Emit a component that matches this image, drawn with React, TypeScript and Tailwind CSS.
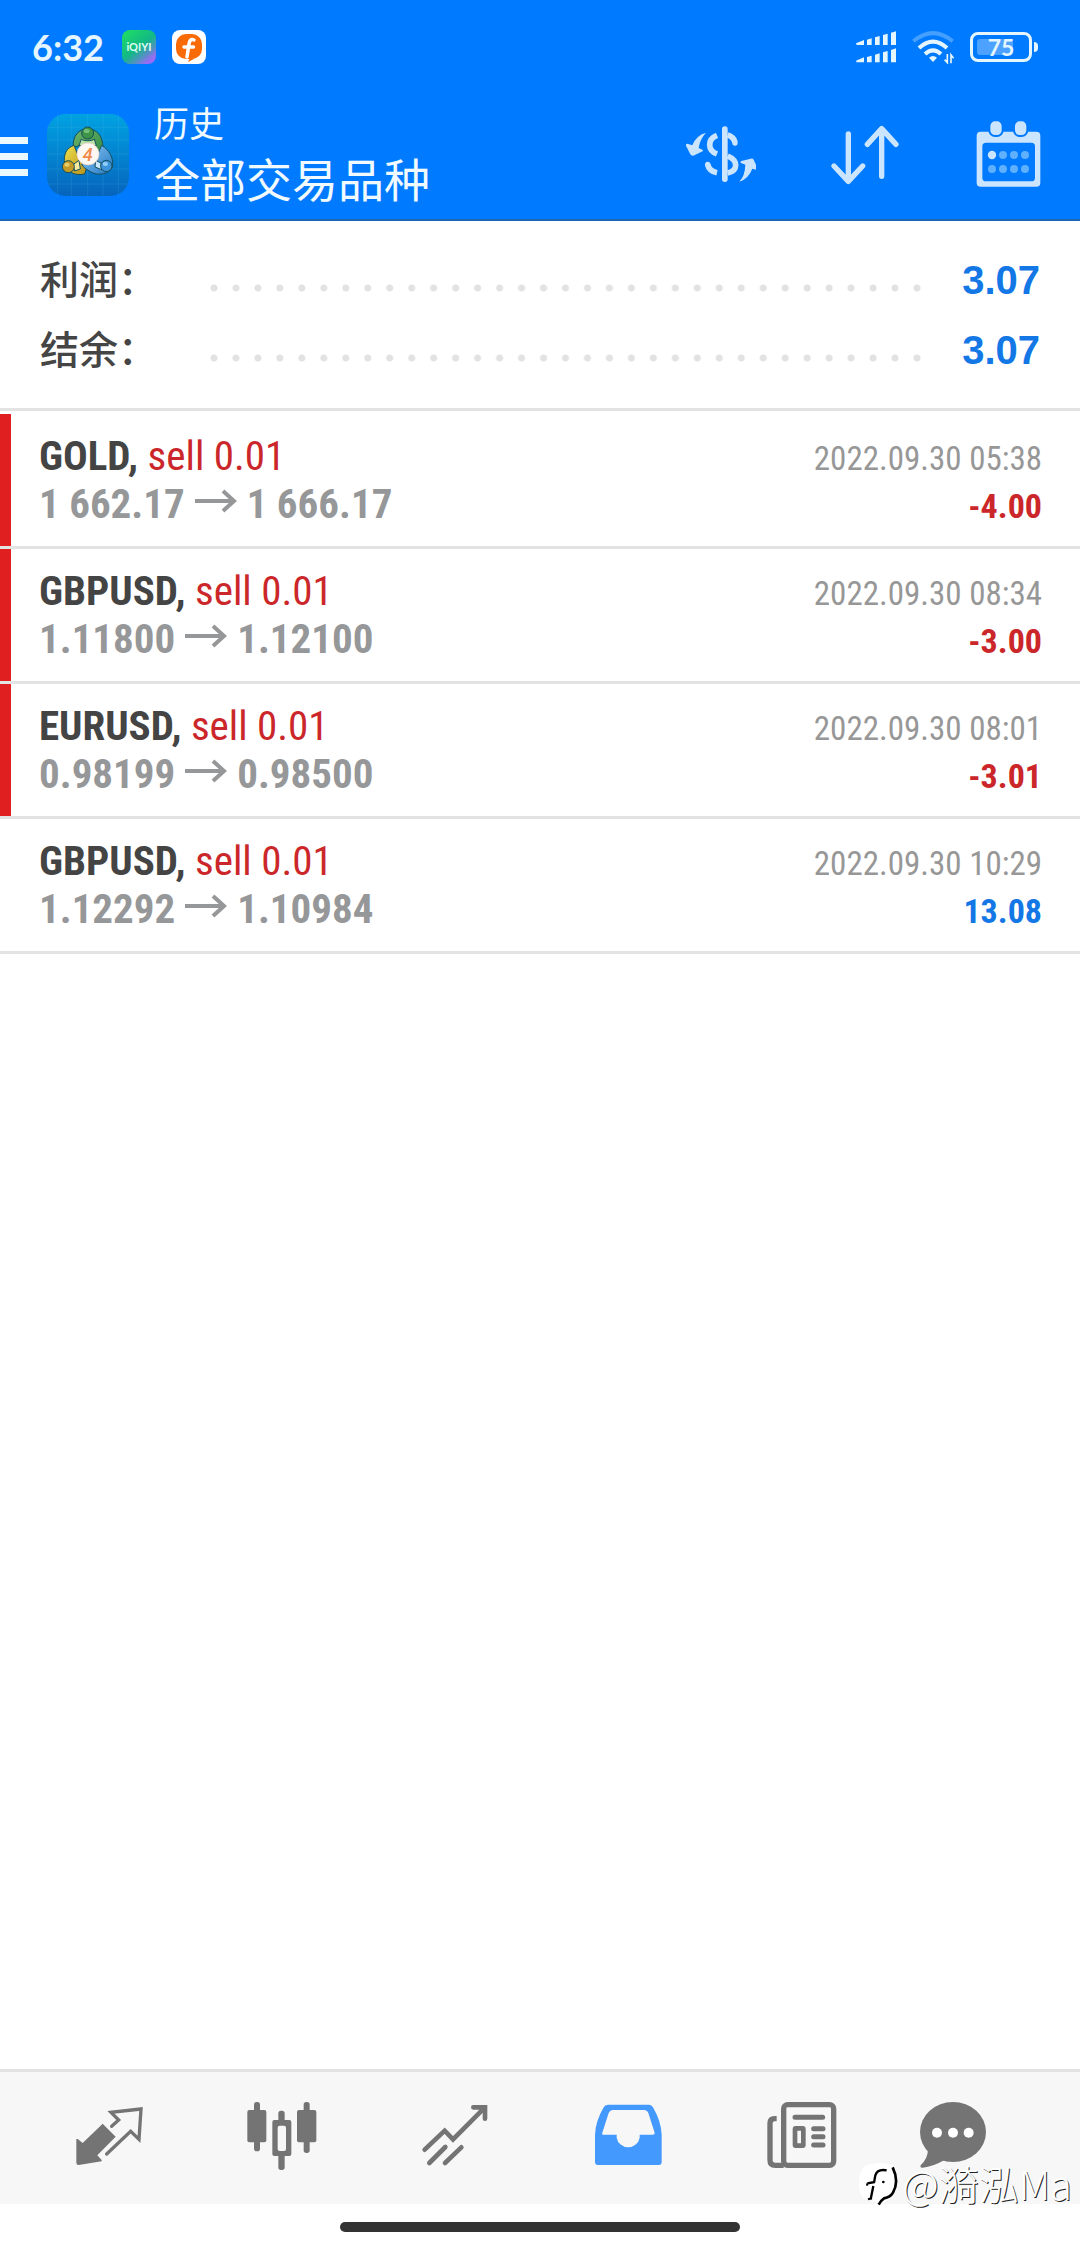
import type { ReactNode } from "react";

type Deal = {
  symbol: string;
  side: string;
  open: string;
  close: string;
  time: string;
  profit: string;
};

const deals: Deal[] = [
  { symbol: "GOLD", side: "sell 0.01", open: "1 662.17", close: "1 666.17", time: "2022.09.30 05:38", profit: "-4.00" },
  { symbol: "GBPUSD", side: "sell 0.01", open: "1.11800", close: "1.12100", time: "2022.09.30 08:34", profit: "-3.00" },
  { symbol: "EURUSD", side: "sell 0.01", open: "0.98199", close: "0.98500", time: "2022.09.30 08:01", profit: "-3.01" },
  { symbol: "GBPUSD", side: "sell 0.01", open: "1.12292", close: "1.10984", time: "2022.09.30 10:29", profit: "13.08" },
];

const summary = [
  { label: "利润：", value: "3.07" },
  { label: "结余：", value: "3.07" },
];

function StatusBar() {
  return (
    <div className="flex h-[94px] items-center justify-between pr-[42px] pl-8 text-[#e6f6ff]">
      <div className="flex items-center">
        <span className="w-[90px] font-[Lato,sans-serif] text-[36px] leading-none font-bold">6:32</span>
        <svg className="size-[34px]" viewBox="0 0 34 34" aria-label="iQIYI">
          <defs>
            <linearGradient id="iq" x1="0.1" y1="0" x2="0.9" y2="1">
              <stop offset="0" stopColor="#1fdc62" />
              <stop offset="0.5" stopColor="#12b886" />
              <stop offset="0.72" stopColor="#4f93c0" />
              <stop offset="0.9" stopColor="#9a6cf5" />
            </linearGradient>
          </defs>
          <rect width="34" height="34" rx="8" fill="url(#iq)" />
          <text x="17" y="21" textAnchor="middle" fontFamily="Lato, sans-serif" fontSize="11" fontWeight="700" fill="#ddfff2">iQIYI</text>
        </svg>
        <svg className="ml-4 size-[34px]" viewBox="0 0 34 34" aria-hidden="true">
          <rect width="34" height="34" rx="8" fill="#fff" />
          <rect x="4" y="4" width="26" height="25" rx="10" fill="#f96b07" />
          <path d="M22 10C19 8.500 17.500 10.500 17 14L15 27M12 17H21.500" fill="none" stroke="#fff" strokeWidth="3.500" strokeLinecap="round" />
          <path d="M16 32L17.500 28.500H23Z" fill="#f96b07" />
        </svg>
      </div>
      <div className="flex items-center">
        <svg className="h-8 w-10" viewBox="678 95 120 96" fill="currentColor" aria-label="信号">
          <path d="M678 132L702 122V137H680ZM711 121L725 117V137H711ZM735 114L749 110V137H735ZM759 107L773 103V137H759ZM783 100L798 96V137H783Z" />
          <path d="M678 184L702 174V189H680ZM711 173L725 169V189H711ZM735 166L749 162V189H735ZM759 159L773 155V189H759ZM783 152L798 147V189H783Z" />
        </svg>
        <svg className="ml-4 h-[34px] w-[42px]" viewBox="846 93 126 102" fill="none" stroke="currentColor" aria-label="Wi-Fi">
          <path d="M850 127Q909 78 968 127" strokeWidth="12" opacity="0.3" />
          <path d="M867 147Q909 109 951 147" strokeWidth="12" />
          <path d="M885 165Q909 143 933 165" strokeWidth="12" />
          <path d="M897 176Q909 166 921 176L909 189Z" fill="currentColor" stroke="none" />
          <path d="M952 165V191L944 182M963 193V168L971 178" strokeWidth="5" />
        </svg>
        <div className="ml-4 flex items-center gap-[2px]">
          <div className="relative flex h-[30px] w-[62px] items-center justify-center rounded-[8px] border-[3px] border-current">
            <span className="absolute top-1 bottom-1 left-1 w-9 rounded-[3px] bg-white/30" />
            <span className="relative font-[Lato,sans-serif] text-[23px] leading-none font-bold">75</span>
          </div>
          <span className="h-[10px] w-1 rounded-r-sm bg-current" />
        </div>
      </div>
    </div>
  );
}

function AppLogo() {
  return (
    <svg className="mb-[3px] ml-[19px] size-[82px] shrink-0" viewBox="52 43 246 246" aria-label="MetaTrader 4">
      <defs>
        <linearGradient id="bg" x1="0.5" y1="0" x2="0.5" y2="1">
          <stop offset="0" stopColor="#00a2e2" />
          <stop offset="1" stopColor="#0664bd" />
        </linearGradient>
        <linearGradient id="gr" x1="0" y1="0" x2="1" y2="1">
          <stop offset="0" stopColor="#6fb56b" />
          <stop offset="1" stopColor="#2f8a43" />
        </linearGradient>
        <linearGradient id="ye" x1="0" y1="0" x2="1" y2="1">
          <stop offset="0" stopColor="#f0e04a" />
          <stop offset="1" stopColor="#b58e1c" />
        </linearGradient>
        <linearGradient id="bl" x1="0" y1="0" x2="1" y2="1">
          <stop offset="0" stopColor="#8cc8f2" />
          <stop offset="1" stopColor="#2277c4" />
        </linearGradient>
      </defs>
      <rect x="52" y="43" width="246" height="246" rx="56" fill="url(#bg)" />
      <path d="M84 43V289M125 43V289M174 43V289M220 43V289M266 43V289M52 83H298M52 121H298M52 163H298M52 208H298M52 253H298" stroke="#6fd0f5" strokeWidth="2" opacity="0.2" />
      <g stroke="#154f5c" strokeWidth="3">
        <path d="M131 143C128 108 148 88 174 87C202 88 220 110 220 143C220 158 210 170 198 176L180 130L150 138Z" fill="url(#gr)" />
        <path d="M133 137C108 145 101 168 105 192C110 216 137 230 165 223L176 190L146 170Z" fill="url(#ye)" />
        <path d="M216 137C238 150 252 174 249 200C242 222 205 232 180 215C168 208 160 202 156 194L198 176Z" fill="url(#bl)" />
        <path d="M155 118C160 125 188 125 194 118L200 138H148Z" fill="#b9e2a8" />
        <path d="M130 195L148 182L152 208L135 214Z" fill="#f7eaa0" />
        <path d="M214 190L198 182L196 202L216 210Z" fill="#c5e8ff" />
        <circle cx="174" cy="100" r="18" fill="#3d9347" />
        <circle cx="116" cy="201" r="18" fill="#c39a25" />
        <circle cx="230" cy="199" r="17" fill="#3b93da" />
      </g>
      <ellipse cx="171" cy="94" rx="9" ry="6" fill="#8fcf8d" opacity="0.7" />
      <ellipse cx="112" cy="195" rx="8" ry="6" fill="#f7e28c" opacity="0.7" />
      <ellipse cx="227" cy="193" rx="8" ry="6" fill="#a9dcff" opacity="0.8" />
      <circle cx="175" cy="163" r="33" fill="#fff7f2" stroke="#e8cfc4" strokeWidth="2" />
      <text x="174" y="183" textAnchor="middle" fontFamily="Roboto, sans-serif" fontSize="54" fontWeight="500" fontStyle="italic" fill="#ef8a4c">4</text>
    </svg>
  );
}

function HeaderButton({ label, viewBox, children }: { label: string; viewBox: string; children: ReactNode }) {
  return (
    <button type="button" aria-label={label} className="flex w-36 items-center justify-center text-[#cce5ff]">
      <svg className="size-[72px]" viewBox={viewBox}>
        {children}
      </svg>
    </button>
  );
}

function Header() {
  return (
    <header className="border-b-2 border-[#1c68b5] bg-[#007aff]">
      <StatusBar />
      <div className="flex h-[125px] items-stretch justify-between">
        <div className="flex items-center">
          <button type="button" aria-label="菜单" className="flex w-7 flex-col gap-[9px]">
            <span className="h-[7px] w-full bg-[#eaf8ff]" />
            <span className="h-[7px] w-full bg-[#eaf8ff]" />
            <span className="h-[7px] w-full bg-[#eaf8ff]" />
          </button>
          <AppLogo />
          <h1 className="ml-[25px] pb-2 font-['Noto_Sans_CJK_SC',sans-serif] font-normal text-[#f0faff]">
            <span className="block text-[35px] leading-[48px]">历史</span>
            <span className="block text-[46px] leading-[62px]">全部交易品种</span>
          </h1>
        </div>
        <div className="flex">
          <HeaderButton label="交易品种" viewBox="162 361 216 216">
            <rect x="276" y="377" width="17" height="167" rx="8" fill="currentColor" />
            <g fill="none" stroke="currentColor" strokeWidth="17">
              <path d="M261 404Q239 413 239 432Q239 451 261 460" />
              <path d="M293 403Q311 408 315 426" />
              <path d="M293 466Q317 476 317 494Q317 512 293 517" />
              <path d="M233 491Q237 511 261 516" />
            </g>
            <circle cx="315" cy="427" r="8" fill="currentColor" />
            <circle cx="233" cy="491" r="8" fill="currentColor" />
            <path d="M228 396Q198 404 187 434L172 429Q166 429 168 435L181 461Q184 466 190 465L218 452Q221 449 217 447L206 442Q210 415 228 396Z" fill="currentColor" />
            <path d="M328 543Q345 525 346 492L333 487Q330 484 334 481L362 474Q368 472 371 477L384 505Q384 510 380 508L367 504Q355 535 328 543Z" fill="currentColor" />
          </HeaderButton>
          <HeaderButton label="排序" viewBox="594 361 216 216">
            <path d="M655 400V542M612 496L655 542L698 496M755 527V384M712 431L755 384L798 431" fill="none" stroke="currentColor" strokeWidth="16" strokeLinecap="round" strokeLinejoin="round" />
          </HeaderButton>
          <HeaderButton label="日期" viewBox="1026 361 216 216">
            <path fillRule="evenodd" d="M1052 393H1219Q1231 393 1231 405V546Q1231 558 1219 558H1052Q1040 558 1040 546V405Q1040 393 1052 393ZM1068 426Q1057 426 1057 437V531Q1057 542 1068 542H1204Q1215 542 1215 531V437Q1215 426 1204 426Z" fill="currentColor" />
            <rect x="1078" y="359" width="40" height="47" rx="17" fill="currentColor" stroke="#007aff" strokeWidth="6" />
            <rect x="1152" y="359" width="40" height="47" rx="17" fill="currentColor" stroke="#007aff" strokeWidth="6" />
            <circle cx="1086" cy="463" r="12.500" fill="currentColor" />
            <g fill="#5fb0ff">
              <circle cx="1119" cy="463" r="12" />
              <circle cx="1152" cy="463" r="12" />
              <circle cx="1185" cy="463" r="12" />
              <circle cx="1086" cy="505" r="12" />
              <circle cx="1119" cy="505" r="12" />
              <circle cx="1152" cy="505" r="12" />
              <circle cx="1185" cy="505" r="12" />
            </g>
          </HeaderButton>
        </div>
      </div>
    </header>
  );
}

function Summary() {
  return (
    <dl className="border-b-[3px] border-[#e3e3e4] px-10 pt-6 pb-[23px]">
      {summary.map((row) => (
        <div key={row.label} className="flex h-[70px] items-center">
          <dt className="w-[163px] pb-[6px] font-['Noto_Sans_CJK_SC',sans-serif] text-[39px] leading-none font-medium text-[#454545]">{row.label}</dt>
          <span aria-hidden="true" className="mt-4 h-[22px] flex-1 bg-[radial-gradient(circle,#e2e2e2_3px,transparent_4px)] bg-[length:22px_22px] bg-repeat-round" />
          <dd className="w-28 text-right font-['Liberation_Sans',sans-serif] text-[40px] leading-none font-bold text-[#1377e6]">{row.value}</dd>
        </div>
      ))}
    </dl>
  );
}

function DealRow({ deal }: { deal: Deal }) {
  const loss = deal.profit.startsWith("-");
  return (
    <li className="flex h-[135px] border-b-[3px] border-[#e3e3e4] font-['Roboto_Condensed',Roboto,sans-serif]">
      <span className={loss ? "w-[11px] bg-[#e02020]" : "w-[11px]"} />
      <div className="flex-1 pt-[18px] pr-[38px] pl-7">
        <div className="flex h-12 items-baseline justify-between leading-[48px]">
          <p className="text-[41px] text-[#cb272a]">
            <b className="font-bold text-[#444444]">{deal.symbol},</b> {deal.side}
          </p>
          <time className="text-[33px] text-[#979797]">{deal.time}</time>
        </div>
        <div className="flex h-12 items-baseline justify-between leading-[48px] font-bold">
          <p className="text-[41px] text-[#969799]">
            {deal.open}
            <svg className="mx-[10px] inline-block h-6 w-[42px] align-[5px]" viewBox="0 0 42 24" fill="none" stroke="currentColor" strokeWidth="4" aria-label="至">
              <path d="M0 12H39M28 2L39 12L28 22" />
            </svg>
            {deal.close}
          </p>
          <span className={loss ? "text-[34px] text-[#cb272a]" : "text-[34px] text-[#1377e6]"}>{deal.profit}</span>
        </div>
      </div>
    </li>
  );
}

function TabButton({ label, viewBox, last, active, children }: { label: string; viewBox: string; last?: boolean; active?: boolean; children: ReactNode }) {
  return (
    <button
      type="button"
      aria-label={label}
      className={`flex items-center justify-center ${last ? "flex-[132]" : "flex-[173]"} ${active ? "text-[#4499ff]" : "text-[#747474]"}`}
    >
      <svg className="size-[72px] shrink-0" viewBox={viewBox}>
        {children}
      </svg>
    </button>
  );
}

function TabBar() {
  return (
    <nav className="flex h-[135px] border-t-[3px] border-[#e3e3e4] bg-[#f7f7f7] pr-[61px] pl-[22px]">
      <TabButton label="行情" viewBox="37 36 216 216">
        <path d="M126 101L165 140L110 196L123 210V214L54 225Q47 225 47 218V147H51L66 159Z" fill="currentColor" />
        <path d="M153 109L174 90L151 67L241 57L235 148L210 124L138 192" fill="none" stroke="currentColor" strokeWidth="10" strokeLinecap="round" />
      </TabButton>
      <TabButton label="图表" viewBox="556 36 216 216">
        <g fill="currentColor">
          <rect x="560" y="60" width="57" height="97" rx="6" />
          <rect x="580" y="36" width="18" height="148" rx="8" />
          <rect x="709" y="60" width="58" height="97" rx="6" />
          <rect x="729" y="36" width="18" height="153" rx="8" />
          <rect x="635" y="90" width="57" height="108" rx="6" />
          <rect x="653" y="62" width="19" height="178" rx="8" />
        </g>
        <rect x="651" y="107" width="25" height="76" rx="6" fill="#f7f7f7" />
      </TabButton>
      <TabButton label="交易" viewBox="1075 36 216 216">
        <path d="M1092 179L1152 122L1177 148L1272 53M1238 52H1273V86M1154 171L1106 219M1202 172L1153 219" fill="none" stroke="currentColor" strokeWidth="14" strokeLinecap="round" />
      </TabButton>
      <TabButton label="历史" viewBox="34 36 216 216" active>
        <path d="M82 44H205Q213 44 217 52Q242 95 243 135V216Q243 225 234 225H52Q43 225 43 216V135Q44 95 69 52Q73 44 82 44Z" fill="currentColor" />
        <path d="M96 60H190Q199 60 203 69L222 128Q223 134 216 134H177V143A35 35 0 0 1 108 143V134H70Q62 134 65 128L84 69Q88 60 96 60Z" fill="#f7f7f7" />
      </TabButton>
      <TabButton label="新闻" viewBox="553 36 216 216">
        <g fill="none" stroke="currentColor" strokeWidth="16">
          <rect x="609" y="44" width="150" height="182" rx="12" />
          <path d="M588 86H582Q568 86 568 100V210Q568 226 584 226H609" />
          <path d="M643 82H726M699 116H727M699 140H727M699 165H727" strokeLinecap="round" strokeWidth="15" />
          <rect x="643" y="115" width="25" height="52" rx="2" strokeWidth="14" />
        </g>
      </TabButton>
      <TabButton label="聊天" viewBox="1011 36 216 216" last>
        <ellipse cx="1119" cy="126" rx="99" ry="90" fill="currentColor" />
        <path d="M1044 180Q1043 206 1022 226Q1019 234 1028 233Q1060 230 1092 211Z" fill="currentColor" />
        <g fill="#fff">
          <circle cx="1071" cy="128" r="15" />
          <circle cx="1119" cy="128" r="15" />
          <circle cx="1166" cy="128" r="15" />
        </g>
      </TabButton>
    </nav>
  );
}

function Watermark() {
  return (
    <div className="pointer-events-none absolute right-2 bottom-[38px] flex items-center">
      <svg className="h-[46px] w-11" viewBox="0 0 132 138" aria-hidden="true">
        <path d="M30 8Q66 -2 100 8Q118 20 118 60Q116 100 92 112L64 128L50 116Q16 114 8 96Q-2 66 6 36Q12 14 30 8Z" fill="#fff" />
        <path d="M86 25Q58 20 52 40L48 62M28 64L50 60M46 72L38 112" fill="none" stroke="#000" strokeWidth="7" />
        <path d="M28 64L27 71M30 112L42 109" stroke="#000" strokeWidth="6" />
        <circle cx="76" cy="60" r="4" fill="#000" />
        <path d="M104 16Q124 58 105 92Q97 106 78 109Q70 114 62 128" fill="none" stroke="#000" strokeWidth="8" />
      </svg>
      <span className="pb-1 font-['Noto_Sans_CJK_SC',sans-serif] text-[40px] leading-[46px] font-light text-white [text-shadow:1px_1px_0_#222]">@漪泓Ma</span>
    </div>
  );
}

export default function App() {
  return (
    <div className="relative flex min-h-screen flex-col bg-white">
      <Header />
      <main className="flex-1">
        <Summary />
        <ul className="pt-[3px]">
          {deals.map((deal) => (
            <DealRow key={deal.time} deal={deal} />
          ))}
        </ul>
      </main>
      <TabBar />
      <div className="flex h-11 justify-center bg-white pt-[18px]">
        <span className="h-[10px] w-[400px] rounded-full bg-[#333333]" />
      </div>
      <Watermark />
    </div>
  );
}
